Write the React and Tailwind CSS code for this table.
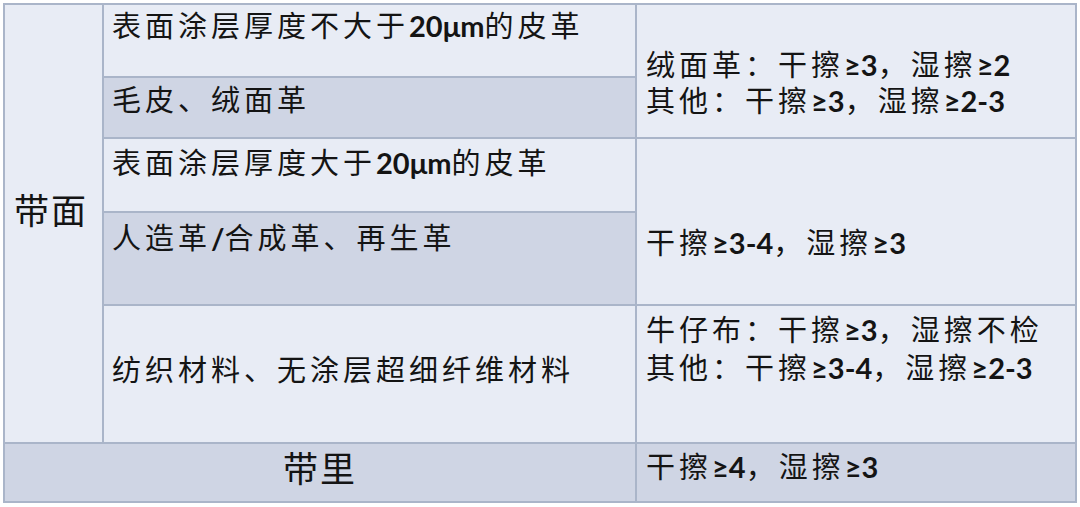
const LIGHT = "bg-[#e8ecf5]";
const DARK = "bg-[#cfd5e4]";

// Numbers in the sheet are set bold in a Latin face, the rest in the CJK face.
function B({ children }) {
  return <span className="font-bold tracking-normal">{children}</span>;
}

function Cell({ className = "", children }) {
  return (
    <div className={`text-[29px] leading-[36px] tracking-[4px] text-[#141414] ${className}`}>
      {children}
    </div>
  );
}

export default function App() {
  return (
    <div
      className="w-[1080px] h-[507px] bg-white pt-[3px] pl-[3px]"
      style={{ fontFamily: "Lato, 'Noto Sans CJK SC', sans-serif" }}
    >
      <div className="grid w-[1074px] h-[500px] grid-cols-[97px_531px_438px] grid-rows-[71px_59px_72px_91px_136px_57px] gap-[2px] border-2 border-[#aab5c9] bg-[#aab5c9]">
        {/* 带面 spans the first five rows */}
        <div className={`${LIGHT} row-span-5 flex items-center pb-[26px] pl-[9px] text-[35px] tracking-[2px] text-[#141414]`}>
          带面
        </div>

        <Cell className={`${LIGHT} pl-[8px] pt-[3px]`}>
          表面涂层厚度不大于<B>20μm</B>的皮革
        </Cell>
        <Cell className={`${LIGHT} row-span-2 pl-[9px] pt-[42px]`}>
          <div>绒面革：干擦<B>≥3</B>，湿擦<B>≥2</B></div>
          <div>其他：干擦<B>≥3</B>，湿擦<B>≥2-3</B></div>
        </Cell>

        <Cell className={`${DARK} pl-[8px] pt-[4px]`}>毛皮、绒面革</Cell>

        <Cell className={`${LIGHT} pl-[8px] pt-[6px]`}>
          表面涂层厚度大于<B>20μm</B>的皮革
        </Cell>
        <Cell className={`${LIGHT} row-span-2 pl-[9px] pt-[86px]`}>
          干擦<B>≥3-4</B>，湿擦<B>≥3</B>
        </Cell>

        <Cell className={`${DARK} pl-[8px] pt-[7px]`}>
          人造革<B>/</B>合成革、再生革
        </Cell>

        <Cell className={`${LIGHT} flex items-center pl-[8px] pb-[8px]`}>
          纺织材料、无涂层超细纤维材料
        </Cell>
        <Cell className={`${LIGHT} pl-[9px] pt-[5px] leading-[38px]`}>
          <div>牛仔布：干擦<B>≥3</B>，湿擦不检</div>
          <div>其他：干擦<B>≥3-4</B>，湿擦<B>≥2-3</B></div>
        </Cell>

        <div className={`${DARK} col-span-2 flex items-center justify-center pb-[8px] text-[35px] tracking-[2px] text-[#141414]`}>
          带里
        </div>
        <Cell className={`${DARK} pl-[9px] pt-[5px]`}>
          干擦<B>≥4</B>，湿擦<B>≥3</B>
        </Cell>
      </div>
    </div>
  );
}
